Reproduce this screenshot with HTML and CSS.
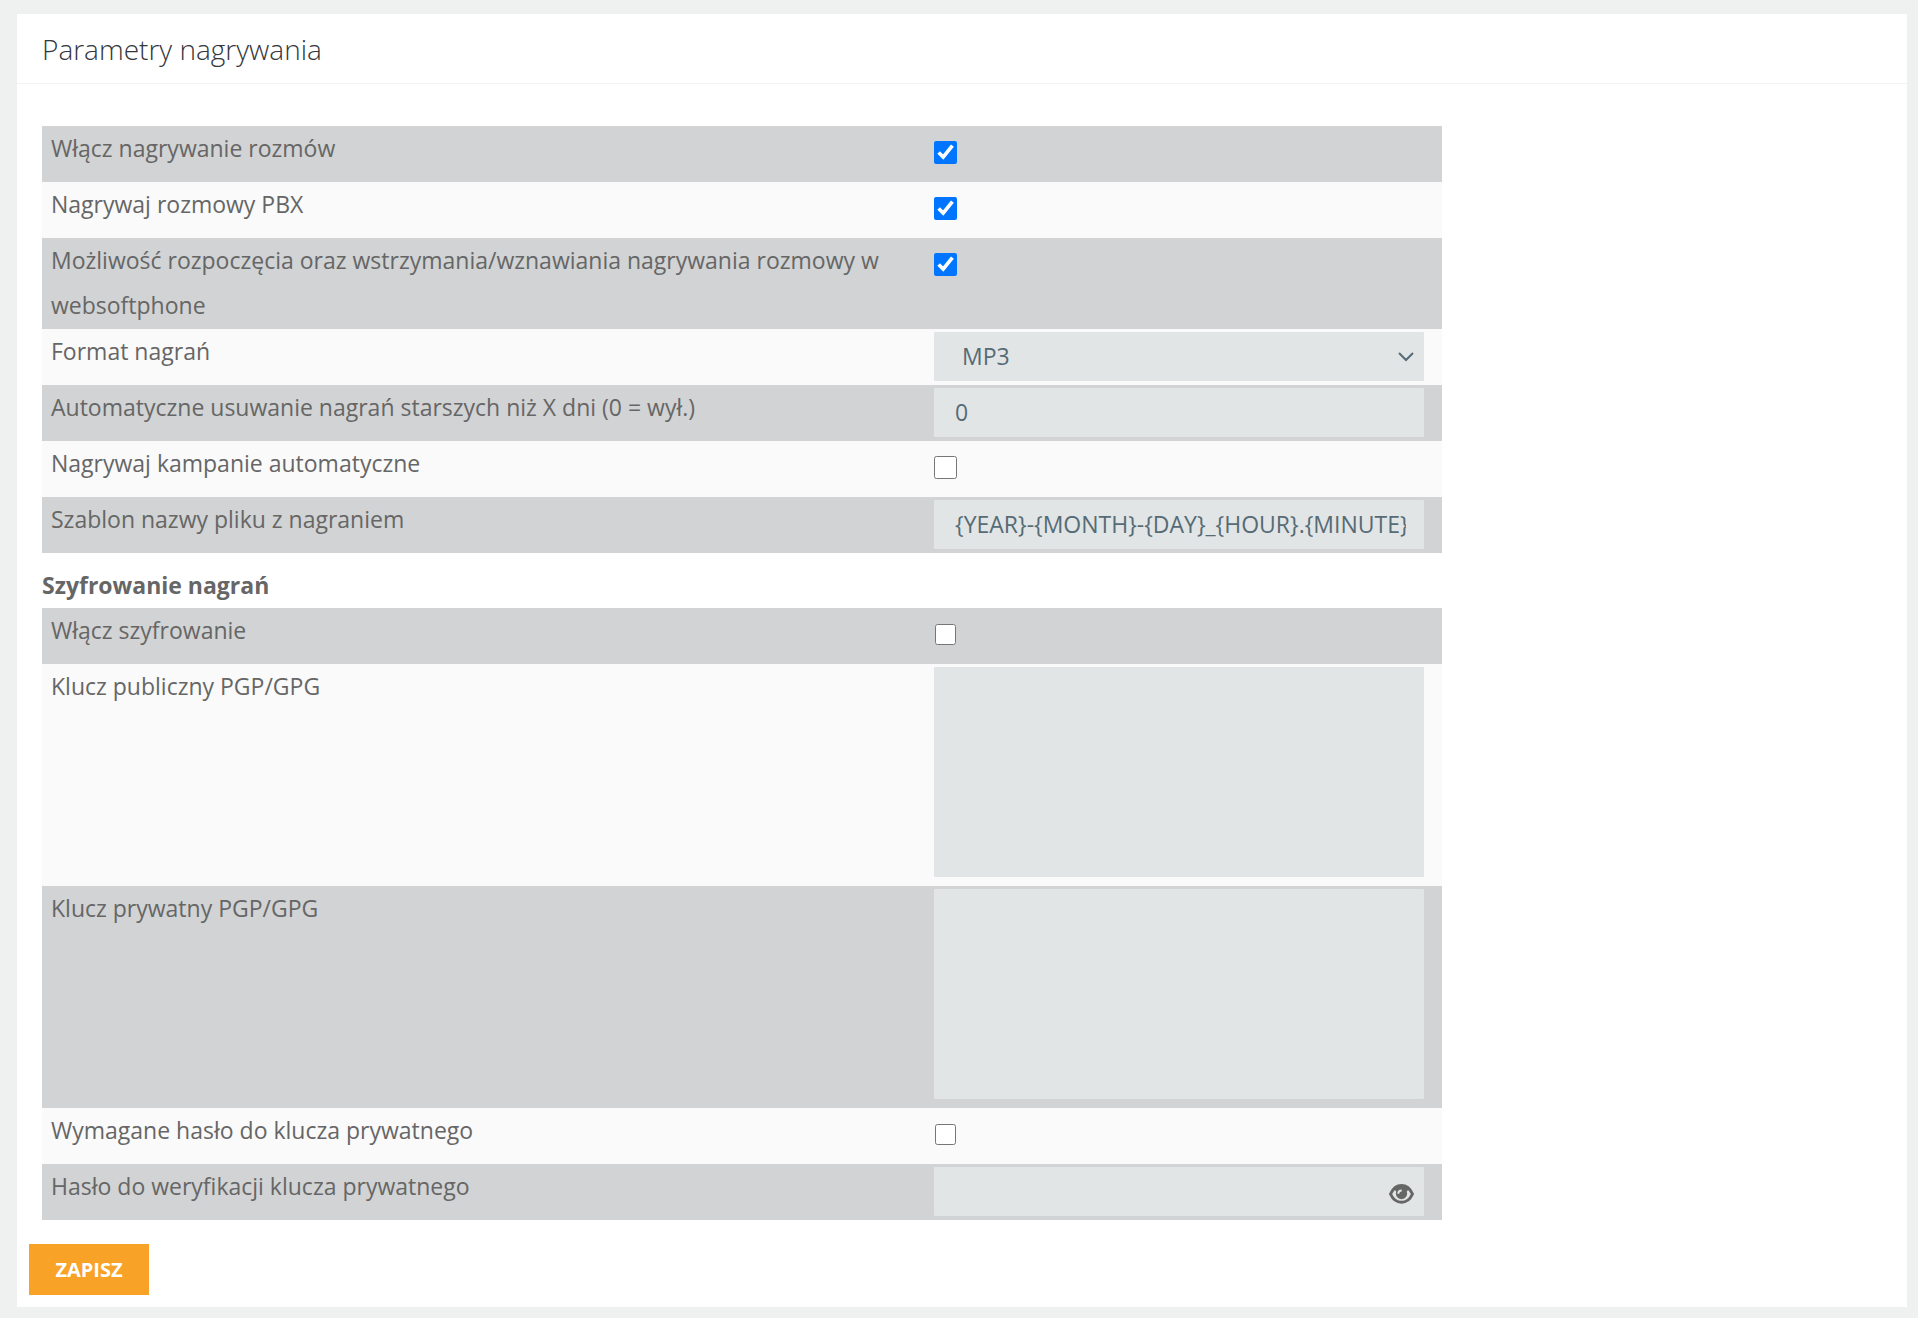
FILE: index.html
```html
<!DOCTYPE html>
<html lang="pl">
<head>
<meta charset="utf-8">
<meta name="viewport" content="width=device-width, initial-scale=1">
<title>Parametry nagrywania</title>
<link rel="stylesheet" href="styles.css">
</head>
<body>
<main class="card">
  <header class="card-header">
    <h1 class="card-title">Parametry nagrywania</h1>
  </header>
  <form class="card-body">
    <section class="rows">
      <div class="row">
        <label class="label" for="rec-enabled">Włącz nagrywanie rozmów</label>
        <div class="control"><input class="check" type="checkbox" id="rec-enabled" checked></div>
      </div>
      <div class="row">
        <label class="label" for="rec-pbx">Nagrywaj rozmowy PBX</label>
        <div class="control"><input class="check" type="checkbox" id="rec-pbx" checked></div>
      </div>
      <div class="row">
        <label class="label" for="rec-websoftphone">Możliwość rozpoczęcia oraz wstrzymania/wznawiania nagrywania rozmowy w websoftphone</label>
        <div class="control"><input class="check" type="checkbox" id="rec-websoftphone" checked></div>
      </div>
      <div class="row">
        <label class="label" for="rec-format">Format nagrań</label>
        <div class="control">
          <select class="field field-select" id="rec-format"><option>MP3</option><option>WAV</option></select>
          <svg class="chevron" viewBox="0 0 16 10" aria-hidden="true"><path d="M1 1l7 7 7-7"/></svg>
        </div>
      </div>
      <div class="row">
        <label class="label" for="rec-retention">Automatyczne usuwanie nagrań starszych niż X dni (0 = wył.)</label>
        <div class="control"><input class="field" type="text" id="rec-retention" value="0"></div>
      </div>
      <div class="row">
        <label class="label" for="rec-campaigns">Nagrywaj kampanie automatyczne</label>
        <div class="control"><input class="check" type="checkbox" id="rec-campaigns"></div>
      </div>
      <div class="row">
        <label class="label" for="rec-template">Szablon nazwy pliku z nagraniem</label>
        <div class="control"><input class="field" type="text" id="rec-template" value="{YEAR}-{MONTH}-{DAY}_{HOUR}.{MINUTE}.{SECOND}"></div>
      </div>
    </section>

    <h2 class="section-title">Szyfrowanie nagrań</h2>

    <section class="rows">
      <div class="row">
        <label class="label" for="enc-enabled">Włącz szyfrowanie</label>
        <div class="control"><input class="check check-small" type="checkbox" id="enc-enabled"></div>
      </div>
      <div class="row">
        <label class="label" for="enc-public">Klucz publiczny PGP/GPG</label>
        <div class="control control-area"><textarea class="field field-area" id="enc-public"></textarea></div>
      </div>
      <div class="row">
        <label class="label" for="enc-private">Klucz prywatny PGP/GPG</label>
        <div class="control control-area"><textarea class="field field-area" id="enc-private"></textarea></div>
      </div>
      <div class="row">
        <label class="label" for="enc-pass-required">Wymagane hasło do klucza prywatnego</label>
        <div class="control"><input class="check check-small" type="checkbox" id="enc-pass-required"></div>
      </div>
      <div class="row">
        <label class="label" for="enc-pass">Hasło do weryfikacji klucza prywatnego</label>
        <div class="control">
          <input class="field" type="password" id="enc-pass">
          <button class="reveal" type="button" aria-label="Pokaż hasło">
            <svg class="reveal-icon" viewBox="0 0 25 20" aria-hidden="true">
              <path class="eye-outline" d="M1.5 10C4 4.500 8 1.500 12.500 1.500S21 4.500 23.500 10C21 15.500 17 18.300 12.500 18.300S4 15.500 1.500 10z"/>
              <path class="eye-lid" d="M5.500 5.500Q9 1.500 12.500 1.500T19.500 5.500L17.800 7.500A5.700 5.700 0 1 1 7.200 7.500z"/>
              <path class="eye-glint" d="M12.700 6.500C10.500 6.500 9.300 7.700 9.300 9.800"/>
            </svg>
          </button>
        </div>
      </div>
    </section>

    <div class="actions"><button class="save" type="submit">ZAPISZ</button></div>
  </form>
</main>
</body>
</html>
```
FILE: styles.css
```css
* {
  box-sizing: border-box;
}

body {
  margin: 0;
  padding: 14px 11px 11px 17px;
  background: #eff1f1;
  color: #676a6c;
  font-family: "Open Sans", sans-serif;
  font-size: 23px;
  line-height: 45px;
}

.card {
  background: #fff;
}

.card-header {
  padding: 13px 25px 11px;
  border-bottom: 1px solid #f3f4f4;
}

.card-title {
  margin: 0;
  color: #34373c;
  font-size: 28px;
  font-weight: 300;
}

.card-body {
  padding: 42px 25px 12px;
}

.rows {
  max-width: 1400px;
}

.row {
  display: grid;
  grid-template-columns: minmax(0, 1fr) 508px;
  background: #fafafa;
}

.row:nth-child(odd) {
  background: #d1d3d4;
}

.label {
  padding: 0 9px 1px;
  color: #666;
}

.control {
  position: relative;
  display: flex;
  align-items: flex-start;
  min-height: 56px;
  padding: 3px 18px 4px 0;
}

.control-area {
  padding-bottom: 9px;
}

.check {
  width: 23px;
  height: 23px;
  margin: 12px 0 0;
}

.check-small {
  width: 21px;
  height: 21px;
  margin: 13px 1px 0;
}

.field {
  width: 100%;
  height: 49px;
  padding: 0 18px 2px 21px;
  border: 0;
  border-radius: 1px;
  background: #e1e5e5;
  color: #566b76;
  font: inherit;
}

.field-select {
  padding: 0 28px;
  appearance: none;
}

.field-area {
  height: 210px;
  padding: 8px 21px;
  resize: none;
}

.chevron {
  position: absolute;
  top: 23px;
  right: 28px;
  width: 16px;
  height: 10px;
  fill: none;
  stroke: #566b76;
  stroke-width: 2;
  pointer-events: none;
}

.reveal {
  position: absolute;
  top: 20px;
  right: 28px;
  width: 25px;
  height: 20px;
  padding: 0;
  border: 0;
  background: none;
}

.reveal-icon {
  display: block;
  width: 25px;
  height: 20px;
}

.eye-outline {
  fill: none;
  stroke: #666;
  stroke-width: 3;
}

.eye-lid {
  fill: #666;
}

.eye-glint {
  fill: none;
  stroke: #e1e5e5;
  stroke-width: 2;
}

.section-title {
  margin: 10px 0 0;
  color: #666;
  font-size: 23px;
  font-weight: 700;
}

.actions {
  display: flex;
  margin: 24px 0 0 -13px;
}

.save {
  min-width: 120px;
  height: 51px;
  padding: 0 26px;
  border: 0;
  background: #f8a227;
  color: #fff;
  font-family: inherit;
  font-size: 20px;
  font-weight: 700;
}
```
